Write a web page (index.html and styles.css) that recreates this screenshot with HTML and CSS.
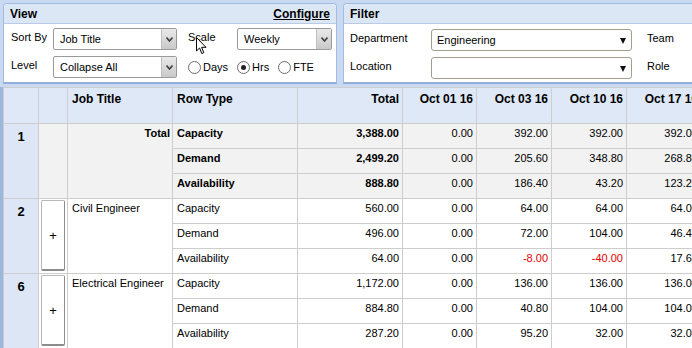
FILE: index.html
```html
<!DOCTYPE html>
<html lang="en">
<head>
    <meta charset="UTF-8">
    <title>Capacity Planner</title>
    <link rel="stylesheet" href="styles.css">
</head>
<body>

    <div class="toolbar">
        <section class="panel panel-view">
            <header class="panel-head">
                <span>View</span>
                <a class="configure" href="#">Configure</a>
            </header>
            <div class="panel-body view-grid">
                <span class="field-label">Sort By</span>
                <div class="combo">
                    <span>Job Title</span>
                    <span class="combo-btn">
                        <svg width="7" height="5" viewBox="0 0 7 5"><path d="M0.5 0.5 L3.5 4 L6.5 0.5" fill="none" stroke="#404040" stroke-width="1.6"/></svg>
                    </span>
                </div>
                <span class="field-label pad-left">Scale</span>
                <div class="combo">
                    <span>Weekly</span>
                    <span class="combo-btn">
                        <svg width="7" height="5" viewBox="0 0 7 5"><path d="M0.5 0.5 L3.5 4 L6.5 0.5" fill="none" stroke="#404040" stroke-width="1.6"/></svg>
                    </span>
                </div>

                <span class="field-label">Level</span>
                <div class="combo">
                    <span>Collapse All</span>
                    <span class="combo-btn">
                        <svg width="7" height="5" viewBox="0 0 7 5"><path d="M0.5 0.5 L3.5 4 L6.5 0.5" fill="none" stroke="#404040" stroke-width="1.6"/></svg>
                    </span>
                </div>
                <div class="radios">
                    <span class="radio"><span class="dot"></span>Days</span>
                    <span class="radio checked"><span class="dot"></span>Hrs</span>
                    <span class="radio"><span class="dot"></span>FTE</span>
                </div>
            </div>
        </section>

        <section class="panel panel-filter">
            <header class="panel-head">
                <span>Filter</span>
            </header>
            <div class="panel-body filter-grid">
                <span class="field-label">Department</span>
                <div class="dropdown"><span>Engineering</span><span class="tri"></span></div>
                <span class="field-label">Team</span>

                <span class="field-label">Location</span>
                <div class="dropdown"><span></span><span class="tri"></span></div>
                <span class="field-label">Role</span>
            </div>
        </section>
    </div>

    <div class="grid-wrap">
        <table class="grid">
            <colgroup>
                <col style="width: 35px">
                <col style="width: 29px">
                <col style="width: 105px">
                <col style="width: 125px">
                <col style="width: 105px">
                <col style="width: 74px">
                <col style="width: 75px">
                <col style="width: 75px">
                <col style="width: 75px">
            </colgroup>
            <thead>
                <tr>
                    <th></th>
                    <th></th>
                    <th>Job Title</th>
                    <th>Row Type</th>
                    <th class="num">Total</th>
                    <th class="num">Oct 01 16</th>
                    <th class="num">Oct 03 16</th>
                    <th class="num">Oct 10 16</th>
                    <th class="num">Oct 17 16</th>
                </tr>
            </thead>
            <tbody>
                <!-- totals -->
                <tr class="total">
                    <td class="rownum" rowspan="3">1</td>
                    <td rowspan="3"></td>
                    <td class="title-total" rowspan="3">Total</td>
                    <td class="strong">Capacity</td>
                    <td class="num strong">3,388.00</td>
                    <td class="num">0.00</td>
                    <td class="num">392.00</td>
                    <td class="num">392.00</td>
                    <td class="num">392.00</td>
                </tr>
                <tr class="total">
                    <td class="strong">Demand</td>
                    <td class="num strong">2,499.20</td>
                    <td class="num">0.00</td>
                    <td class="num">205.60</td>
                    <td class="num">348.80</td>
                    <td class="num">268.80</td>
                </tr>
                <tr class="total">
                    <td class="strong">Availability</td>
                    <td class="num strong">888.80</td>
                    <td class="num">0.00</td>
                    <td class="num">186.40</td>
                    <td class="num">43.20</td>
                    <td class="num">123.20</td>
                </tr>

                <!-- civil -->
                <tr>
                    <td class="rownum" rowspan="3">2</td>
                    <td class="expand" rowspan="3"><button class="expand-btn">+</button></td>
                    <td rowspan="3">Civil Engineer</td>
                    <td>Capacity</td>
                    <td class="num">560.00</td>
                    <td class="num">0.00</td>
                    <td class="num">64.00</td>
                    <td class="num">64.00</td>
                    <td class="num">64.00</td>
                </tr>
                <tr>
                    <td>Demand</td>
                    <td class="num">496.00</td>
                    <td class="num">0.00</td>
                    <td class="num">72.00</td>
                    <td class="num">104.00</td>
                    <td class="num">46.40</td>
                </tr>
                <tr>
                    <td>Availability</td>
                    <td class="num">64.00</td>
                    <td class="num">0.00</td>
                    <td class="num neg">-8.00</td>
                    <td class="num neg">-40.00</td>
                    <td class="num">17.60</td>
                </tr>

                <!-- electrical -->
                <tr>
                    <td class="rownum" rowspan="3">6</td>
                    <td class="expand" rowspan="3"><button class="expand-btn">+</button></td>
                    <td rowspan="3">Electrical Engineer</td>
                    <td>Capacity</td>
                    <td class="num">1,172.00</td>
                    <td class="num">0.00</td>
                    <td class="num">136.00</td>
                    <td class="num">136.00</td>
                    <td class="num">136.00</td>
                </tr>
                <tr>
                    <td>Demand</td>
                    <td class="num">884.80</td>
                    <td class="num">0.00</td>
                    <td class="num">40.80</td>
                    <td class="num">104.00</td>
                    <td class="num">104.00</td>
                </tr>
                <tr>
                    <td>Availability</td>
                    <td class="num">287.20</td>
                    <td class="num">0.00</td>
                    <td class="num">95.20</td>
                    <td class="num">32.00</td>
                    <td class="num">32.00</td>
                </tr>
            </tbody>
        </table>
    </div>

    <svg class="cursor" width="12" height="18" viewBox="0 0 12 18">
        <path d="M0.5 0.5 L0.5 14 L3.6 11 L5.8 16.5 L7.8 15.6 L5.6 10.3 L10 10.3 Z" fill="#ffffff" stroke="#000000" stroke-width="1"/>
    </svg>

</body>
</html>
```

FILE: styles.css
```css
body {
    margin: 0;
    width: 692px;
    height: 348px;
    overflow: hidden;
    background-color: #c8d9f1;
    font-family: "Liberation Sans", Arial, sans-serif;
    font-size: 11px;
    color: #000;
    position: relative;
}

/* top panels */

.toolbar {
    display: flex;
    gap: 6px;
    padding: 3px 0 0 3px;
}

.panel {
    background-color: #fff;
    border: 1px solid #a3bbe0;
    border-bottom: 2px solid #92afdb;
    border-radius: 4px 4px 0 0;
    flex-shrink: 0;
}

.panel-view {
    width: 332px;
}

.panel-filter {
    width: 400px;
}

.panel-head {
    height: 19px;
    background-color: #dce7f6;
    border-bottom: 1px solid #b9cbe6;
    border-radius: 4px 4px 0 0;
    display: flex;
    justify-content: space-between;
    align-items: center;
    padding: 0 6px;
    font-size: 12px;
    font-weight: bold;
}

.configure {
    color: #000;
    text-decoration: underline;
}

.panel-body {
    height: 58px;
    box-sizing: border-box;
    display: grid;
    grid-template-rows: 22px 22px;
    row-gap: 6px;
}

.view-grid {
    padding: 4px 0 0 7px;
    grid-template-columns: 42px 124px 60px 95px;
}

.filter-grid {
    padding: 5px 0 0 6px;
    grid-template-columns: 81px 216px 60px;
}

.field-label {
    padding-top: 3px;
}

.pad-left {
    padding-left: 11px;
}

.combo {
    border: 1px solid #9b9b9b;
    border-radius: 2px;
    display: flex;
    align-items: center;
    justify-content: space-between;
    padding-left: 6px;
    background: #fff;
}

.combo-btn {
    width: 14px;
    height: 20px;
    background: linear-gradient(#e9e9e9, #c9c9c9);
    border-left: 1px solid #c0c0c0;
    display: flex;
    align-items: center;
    justify-content: center;
}

.radios {
    grid-column: 3 / 5;
    display: flex;
    align-items: center;
    padding-left: 11px;
}

.radio {
    display: flex;
    align-items: center;
    gap: 2px;
    margin-right: 9px;
}

.radio .dot {
    width: 11px;
    height: 11px;
    border: 1px solid #6d6d6d;
    border-radius: 50%;
    background: #fff;
    display: flex;
    align-items: center;
    justify-content: center;
}

.radio.checked .dot::after {
    content: "";
    width: 5px;
    height: 5px;
    border-radius: 50%;
    background: #222;
}

.dropdown {
    width: 201px;
    box-sizing: border-box;
    border: 1px solid #a59e90;
    border-radius: 3px;
    display: flex;
    align-items: center;
    justify-content: space-between;
    padding: 0 5px;
}

.tri {
    width: 0;
    height: 0;
    border-left: 3.5px solid transparent;
    border-right: 3.5px solid transparent;
    border-top: 6px solid #111;
    margin-top: 2px;
}

/* grid */

.grid-wrap {
    margin-top: 3px;
    border-left: 3px solid #9db6df;
}

.grid {
    border-collapse: collapse;
    table-layout: fixed;
    width: 698px;
}

.grid th,
.grid td {
    border: 1px solid #cdcdcd;
    padding: 3px 4px 0 4px;
    vertical-align: top;
    text-align: left;
    overflow: hidden;
    white-space: nowrap;
}

.grid th {
    height: 31px;
    background-color: #dfe8f6;
    font-size: 12px;
    padding-top: 4px;
}

.grid td {
    height: 21px;
    background-color: #fff;
}

.grid .num {
    text-align: right;
    padding-right: 3px;
}

.grid td.rownum {
    background-color: #dce6f5;
    text-align: center;
    font-weight: bold;
    font-size: 13px;
    padding-top: 5px;
}

.grid tr.total td {
    background-color: #f2f2f2;
}

.grid tr.total td.rownum {
    background-color: #dce6f5;
}

.grid td.strong,
.grid td.title-total {
    font-weight: bold;
}

.grid td.title-total {
    text-align: right;
    padding-right: 2px;
}

.grid td.expand {
    padding: 1px 2px;
}

.expand-btn {
    width: 24px;
    height: 71px;
    background: #fff;
    border: 1px solid #b8b8b8;
    border-right-color: #8c8c8c;
    border-bottom: 2px solid #8c8c8c;
    border-radius: 2px;
    font-family: "Liberation Sans", Arial, sans-serif;
    font-size: 13px;
    padding: 0;
    color: #000;
}

.neg {
    color: #e60000;
}

.cursor {
    position: absolute;
    left: 196px;
    top: 37px;
}
```
